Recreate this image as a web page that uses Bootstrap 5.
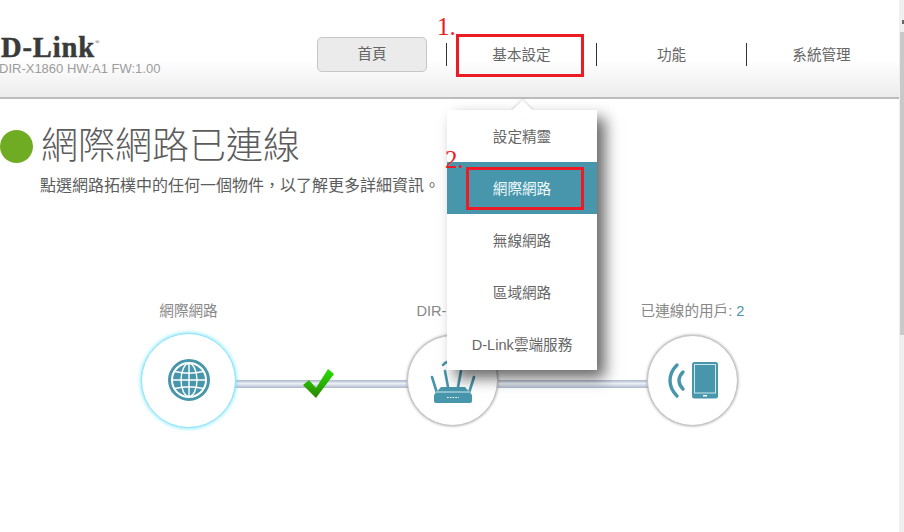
<!DOCTYPE html>
<html lang="zh-Hant">
<head>
    <meta charset="UTF-8">
    <meta name="viewport" content="width=device-width, initial-scale=1.0">
    <title>D-Link DIR-X1860</title>
    <link href="https://cdn.jsdelivr.net/npm/bootstrap@5.3.0/dist/css/bootstrap.min.css" rel="stylesheet">
    <style>
        body {
            height: 532px;
            overflow: hidden;
            background-color: #fff;
            font-family: "Liberation Sans", "Noto Sans CJK TC", sans-serif;
            color: #666;
        }
        .page-wrap { height: 532px; }
        .page-main { width: 899px; }

        /* scrollbar on the right edge */
        .fake-scroll { width: 5px; background-color: #efefef; }
        .fake-arrow { margin: 20px 0 0 3px; width: 2px; height: 4px; background-color: #666; }
        .fake-thumb { margin: 8px 0 0 1px; height: 303px; background-color: #c9c9c9; }

        /* header */
        .top-bar {
            height: 99px;
            padding-top: 37px;
            background: linear-gradient(#fff 0, #fff 60px, #ececec 96px);
            border-bottom: 2px solid #bcbcbc;
        }
        .brand-box { width: 317px; flex: none; }
        .brand-logo {
            font-family: "Liberation Serif", serif;
            font-weight: 700;
            font-size: 28.5px;
            line-height: 21px;
            letter-spacing: .9px;
            color: #3a3a3a;
            -webkit-text-stroke: .5px #3a3a3a;
            padding-left: 1px;
            white-space: nowrap;
        }
        .brand-logo sup { font-size: 6px; font-weight: 400; top: -13px; letter-spacing: 0; -webkit-text-stroke: 0; }
        .brand-model { font-size: 13px; line-height: 16px; margin-top: 3px; color: #9c9c9c; white-space: nowrap; margin-left: -1px; }
        .btn.home-btn {
            width: 110px;
            height: 35px;
            padding: 0;
            margin-right: 19px;
            font-size: 14.6px;
            line-height: 33px;
            color: #666;
            background-color: #ebebeb;
            border: 1px solid #c6c6c6;
            border-radius: 5px;
        }
        .nav-cell {
            width: 150px;
            height: 23px;
            margin-top: 6px;
            border-left: 1px solid #333;
            position: relative;
        }
        .nav-cell .nav-link {
            padding: 1px 0 0;
            font-size: 14.6px;
            line-height: 22px;
            color: #666;
            text-align: center;
        }

        /* drop menu */
        .dropdown-menu.site-drop {
            top: 67px;
            left: 0;
            width: 150px;
            min-width: 0;
            padding: 0;
            border: 0;
            border-radius: 0;
            z-index: 20;
            box-shadow: 8px 8px 14px rgba(0, 0, 0, .6);
        }
        .site-drop::before {
            content: "";
            position: absolute;
            left: 68px;
            top: -7px;
            width: 15px;
            height: 15px;
            background-color: #fff;
            transform: rotate(45deg);
            box-shadow: -1px -1px 2px rgba(0, 0, 0, .12);
        }
        .site-drop .dropdown-item {
            position: relative;
            height: 52px;
            padding: 1px 0 0;
            font-size: 14.6px;
            line-height: 52px;
            text-align: center;
            color: #666;
        }
        .site-drop .dropdown-item.active { background-color: #4796ab; color: #f2fafc; }

        /* status */
        .status-row { margin-top: 25px; height: 45px; }
        .status-dot { width: 33px; height: 33px; border-radius: 50%; background-color: #6fac24; }
        .status-title { font-size: 37px; line-height: 45px; color: #5c5c5c; margin: 0; font-weight: 300; }
        .status-sub { margin: 5px 0 0 40px; font-size: 16px; line-height: 24px; color: #5c5c5c; }

        /* topology */
        .topo-grid {
            display: grid;
            grid-template-columns: 95px 171px 91px 149px 91px;
            grid-template-rows: 22px 96px;
            row-gap: 10px;
            margin: 102px 0 0 141px;
            align-items: center;
        }
        .topo-label { font-size: 14.6px; line-height: 22px; color: #888; text-align: center; white-space: nowrap; justify-self: center; }
        .topo-label span { color: #4796ab; }
        .topo-node {
            justify-self: center;
            width: 91px;
            height: 91px;
            border-radius: 50%;
            background-color: #fff;
            border: 1px solid #c4c4c4;
            box-shadow: 0 0 3px #9a9a9a;
            position: relative;
            z-index: 2;
        }
        .topo-node.is-live {
            width: 95px;
            height: 95px;
            border-color: #8be4f7;
            box-shadow: 0 0 4px #63dffb;
        }
        .topo-link {
            position: relative;
            height: 8px;
            margin: 8px -2px 0;
            background: linear-gradient(#aab7cc, #eef1f6 45%, #aab7cc);
        }
        .topo-check { position: absolute; left: 69px; top: -11px; }

        /* red notes added on the screenshot */
        .mark-box { position: absolute; border: 3px solid #ed1c24; z-index: 30; }
        .mark-num {
            position: absolute;
            font-family: "Liberation Serif", serif;
            font-size: 25px;
            line-height: 24px;
            color: #ed1c24;
            z-index: 30;
        }
        .mark-a { left: 456px; top: 34px; width: 128px; height: 43px; }
        .mark-b { left: 466px; top: 167px; width: 118px; height: 43px; }
        .num-a { left: 437px; top: 15px; }
        .num-b { left: 445px; top: 148px; }
    </style>
</head>
<body>
    <div class="page-wrap d-flex position-relative">
        <div class="page-main">
            <header class="top-bar d-flex">
                <div class="brand-box">
                    <div class="brand-logo">D-Link<sup>®</sup></div>
                    <div class="brand-model">DIR-X1860 HW:A1 FW:1.00</div>
                </div>
                <button type="button" class="btn home-btn">首頁</button>
                <ul class="nav flex-nowrap align-items-start">
                    <li class="nav-item nav-cell">
                        <a class="nav-link" href="#">基本設定</a>
                        <div class="dropdown-menu show site-drop">
                            <a class="dropdown-item" href="#">設定精靈</a>
                            <a class="dropdown-item active" href="#">網際網路</a>
                            <a class="dropdown-item" href="#">無線網路</a>
                            <a class="dropdown-item" href="#">區域網路</a>
                            <a class="dropdown-item" href="#">D-Link雲端服務</a>
                        </div>
                    </li>
                    <li class="nav-item nav-cell"><a class="nav-link" href="#">功能</a></li>
                    <li class="nav-item nav-cell"><a class="nav-link" href="#">系統管理</a></li>
                </ul>
            </header>

            <div class="status-row d-flex align-items-center gap-2">
                <div class="status-dot"></div>
                <h1 class="status-title">網際網路已連線</h1>
            </div>
            <p class="status-sub">點選網路拓樸中的任何一個物件，以了解更多詳細資訊。</p>

            <div class="topo-grid">
                <div class="topo-label">網際網路</div>
                <div></div>
                <div class="topo-label">DIR-X1860</div>
                <div></div>
                <div class="topo-label">已連線的用戶: <span>2</span></div>

                <div class="topo-node is-live d-flex align-items-center justify-content-center">
                    <svg width="42" height="42" viewBox="0 0 42 42">
                        <circle cx="21" cy="21" r="19.5" fill="none" stroke="#4796ab" stroke-width="3"/>
                        <circle cx="21" cy="21" r="16" fill="#4796ab"/>
                        <g fill="none" stroke="#fff" stroke-width="1.4">
                            <ellipse cx="21" cy="21" rx="8" ry="16.5"/>
                            <path d="M21 4V38M4.5 21H37.5M7 12.5Q21 16 35 12.5M7 29.5Q21 26 35 29.5"/>
                        </g>
                    </svg>
                </div>
                <div class="topo-link">
                    <svg class="topo-check" width="31" height="29" viewBox="0 0 31 29">
                        <defs>
                            <linearGradient id="checkFill" x1="0" y1="0" x2="0" y2="1">
                                <stop offset="0" stop-color="#24e000"/>
                                <stop offset="1" stop-color="#2c8500"/>
                            </linearGradient>
                        </defs>
                        <polygon points="0,16 6,11 13,19 25,0 31,5 13,29" fill="url(#checkFill)"/>
                    </svg>
                </div>
                <div class="topo-node">
                    <svg class="position-absolute" style="left:22px;top:24px" width="46" height="44" viewBox="0 0 46 44">
                        <g fill="none" stroke="#4796ab" stroke-linecap="round">
                            <path d="M2 17L7 33M15 11L18 27M31 11L28 27M44 17L39 33" stroke-width="2.6"/>
                            <path d="M13 5Q15 2.5 18 1.5" stroke-width="2.4"/>
                        </g>
                        <path d="M11 27H35L42 35V41Q42 43 40 43H6Q4 43 4 41V35Z" fill="#4796ab"/>
                        <path d="M6 32H40" stroke="#d5eaf0" stroke-width="1"/>
                        <path d="M17 37.5H29" stroke="#fff" stroke-width="1" stroke-dasharray="1.6 1.2"/>
                    </svg>
                </div>
                <div class="topo-link"></div>
                <div class="topo-node d-flex align-items-center justify-content-center">
                    <svg width="50" height="37" viewBox="0 0 50 37">
                        <g fill="none" stroke="#4796ab" stroke-linecap="round" stroke-width="3.4">
                            <path d="M9 3Q2 10 2 18.500Q2 27 9 34"/>
                            <path d="M15 10Q11 14 11 18.500Q11 23 15 27"/>
                        </g>
                        <rect x="24" y="0" width="26" height="36.500" rx="2.500" fill="#4796ab"/>
                        <rect x="26.500" y="2.500" width="21" height="28.500" fill="#4796ab" stroke="#cfe6ec" stroke-width="1"/>
                        <rect x="35" y="33" width="4" height="1.500" fill="#fff"/>
                    </svg>
                </div>
            </div>
        </div>
        <div class="fake-scroll"><div class="fake-arrow"></div><div class="fake-thumb"></div></div>

        <div class="mark-box mark-a"></div>
        <div class="mark-box mark-b"></div>
        <div class="mark-num num-a">1.</div>
        <div class="mark-num num-b">2.</div>
    </div>
    <script src="https://cdn.jsdelivr.net/npm/bootstrap@5.3.0/dist/js/bootstrap.bundle.min.js"></script>
</body>
</html>
